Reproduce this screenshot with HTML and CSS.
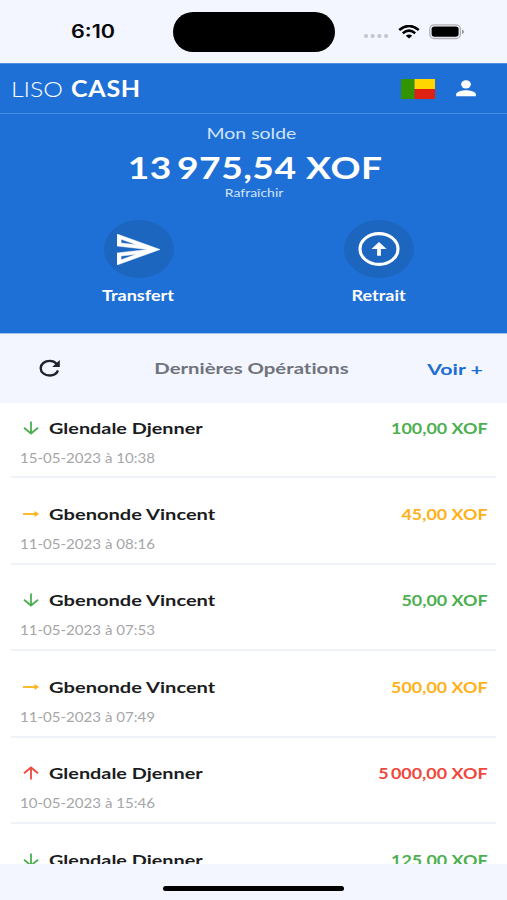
FILE: index.html
```html
<!DOCTYPE html>
<html lang="fr">
<head>
<meta charset="utf-8">
<title>Liso Cash</title>
<link rel="stylesheet" href="styles.css">
</head>
<body>
<div class="phone">
  <div class="status">
    <div class="clock"><span class="wide">6:10</span></div>
    <div class="island"></div>
    <div class="indicators">
      <svg class="dots" width="26" height="6" viewBox="0 0 26 6"><g fill="#c3c5cf"><circle cx="3" cy="3" r="2.1"/><circle cx="9.7" cy="3" r="2.1"/><circle cx="16.4" cy="3" r="2.1"/><circle cx="23.1" cy="3" r="2.1"/></g></svg>
      <svg class="wifi" width="22" height="14" viewBox="0 0 22 14"><g fill="none" stroke="#000" stroke-width="2.6"><path d="M1.2 5Q11-3 20.8 5"/><path d="M4.8 8.2Q11 3.2 17.2 8.2"/></g><path d="M7.8 10.8Q11 8.3 14.2 10.8L11 13.6Z"/></svg>
      <svg class="battery" width="36" height="16" viewBox="0 0 36 16"><rect x=".8" y=".9" width="30.6" height="13.6" rx="4.3" fill="#f4f6fd" stroke="#b0b1b7" stroke-width="1.3"/><rect x="2.6" y="2.6" width="27" height="10.2" rx="2.8"/><path d="M33 5.4Q35 6 35 7.7T33 10Z" fill="#96979f"/></svg>
    </div>
  </div>

  <header class="topbar">
    <div class="brand"><span class="wide liso">LISO</span><span class="wide cash">CASH</span></div>
    <svg class="flag" width="34" height="20" viewBox="0 0 34 20"><path fill="#319400" d="M0 0h13.500v20H0z"/><path fill="#ffd600" d="M13.500 0H34v10H13.500z"/><path fill="#de2110" d="M13.500 10H34v10H13.500z"/></svg>
    <svg class="user" width="20" height="17" viewBox="0 0 20 17" fill="#fff"><ellipse cx="10" cy="4.3" rx="4.9" ry="4.1"/><path d="M.2 16.3v-2.1C.2 11.400 6.700 10.200 10 10.200s9.800 1.200 9.800 4v2.100z"/></svg>
  </header>

  <section class="hero">
    <div class="label"><span class="wide">Mon solde</span></div>
    <div class="balance"><span class="wide">13&#8201;975,54 XOF</span></div>
    <div class="refresh"><span class="wide">Rafraîchir</span></div>
    <div class="actions">
      <div class="action">
        <div class="disc"><svg width="43" height="31" viewBox="2 3 21 18" preserveAspectRatio="none"><path fill="#fff" stroke="#fff" stroke-width=".25" d="M4.010 6.030l7.510 3.220-7.520-1 .010-2.220m7.500 8.720L4 17.970v-2.220l7.510-1M2.010 3L2 10l15 2-15 2 .010 7L23 12 2.010 3z"/></svg></div>
        <div class="caption"><span class="wide">Transfert</span></div>
      </div>
      <div class="action">
        <div class="disc"><svg width="42" height="36" viewBox="0 0 42 36"><ellipse cx="21" cy="18" rx="19" ry="15.400" fill="none" stroke="#fff" stroke-width="3.100"/><path fill="#fff" d="M21 11 28.600 18H22.900v6.800h-3.800V18h-5.700z"/></svg></div>
        <div class="caption"><span class="wide">Retrait</span></div>
      </div>
    </div>
  </section>

  <div class="opsbar">
    <svg class="reload" width="22" height="19" viewBox="0 0 22 19"><path fill="none" stroke="#202329" stroke-width="2.400" d="M19 11.500C17.500 15 14.500 16.500 10.800 16.500 5.600 16.500 1.700 13.300 1.700 9.200S5.600 1.900 10.800 1.900C14 1.900 16 3 17.800 5"/><path fill="#202329" d="M20.800 1v7h-7.600z"/></svg>
    <div class="title"><span class="wide">Dernières Opérations</span></div>
    <div class="more"><span class="wide">Voir +</span></div>
  </div>

  <main class="list">
    <article class="row in">
      <div class="line"><svg class="arrow" viewBox="0 0 16 14"><path d="M8 .5V12.500M1 6.700 8 12.500 15 6.700"/></svg><div class="name"><span class="wide gd">Glendale Djenner</span></div><div class="amount"><span class="wide">100,00 XOF</span></div></div>
      <div class="date"><span class="wide">15-05-2023 à 10:38</span></div>
    </article>
    <article class="row pending">
      <div class="line"><svg class="arrow" viewBox="0 0 16 14"><path d="M0 7H13"/><path class="tip" d="M11.500 4 16 7 11.500 10Z"/></svg><div class="name"><span class="wide">Gbenonde Vincent</span></div><div class="amount"><span class="wide">45,00 XOF</span></div></div>
      <div class="date"><span class="wide">11-05-2023 à 08:16</span></div>
    </article>
    <article class="row in">
      <div class="line"><svg class="arrow" viewBox="0 0 16 14"><path d="M8 .5V12.500M1 6.700 8 12.500 15 6.700"/></svg><div class="name"><span class="wide">Gbenonde Vincent</span></div><div class="amount"><span class="wide">50,00 XOF</span></div></div>
      <div class="date"><span class="wide">11-05-2023 à 07:53</span></div>
    </article>
    <article class="row pending">
      <div class="line"><svg class="arrow" viewBox="0 0 16 14"><path d="M0 7H13"/><path class="tip" d="M11.500 4 16 7 11.500 10Z"/></svg><div class="name"><span class="wide">Gbenonde Vincent</span></div><div class="amount"><span class="wide">500,00 XOF</span></div></div>
      <div class="date"><span class="wide">11-05-2023 à 07:49</span></div>
    </article>
    <article class="row out">
      <div class="line"><svg class="arrow" viewBox="0 0 16 14"><path d="M8 13.500V1.500M1 7.300 8 1.500 15 7.300"/></svg><div class="name"><span class="wide gd">Glendale Djenner</span></div><div class="amount"><span class="wide">5&#8201;000,00 XOF</span></div></div>
      <div class="date"><span class="wide">10-05-2023 à 15:46</span></div>
    </article>
    <article class="row in">
      <div class="line"><svg class="arrow" viewBox="0 0 16 14"><path d="M8 .5V12.500M1 6.700 8 12.500 15 6.700"/></svg><div class="name"><span class="wide gd">Glendale Djenner</span></div><div class="amount"><span class="wide">125,00 XOF</span></div></div>
    </article>
  </main>

  <footer class="homebar"><div class="handle"></div></footer>
</div>
</body>
</html>
```
FILE: styles.css
```css
* { box-sizing: border-box; }
body { margin: 0; font-family: Lato, "Liberation Sans", sans-serif; font-variant-ligatures: none; background: #f3f6ff; }
svg { display: block; flex: none; }
.phone { width: 507px; height: 900px; display: flex; flex-direction: column; overflow: hidden; }

/* the interface uses an extended letter shape */
.wide { display: inline-block; white-space: nowrap; transform: scaleX(var(--stretch, 1)); transform-origin: var(--from, center); }

.status { height: 63px; flex: none; display: grid; grid-template-columns: 173px 162px 1fr; background: #f4f6ff; }
.clock { padding: 21px 0 0 71px; font: 600 18px/22px Inter, sans-serif; color: #080809; --stretch: 1.2; --from: left; }
.island { margin-top: 12px; height: 40px; border-radius: 20px; background: #000; }
.indicators { display: flex; align-items: flex-start; padding-left: 28px; }
.dots { margin-top: 33px; }
.wifi { margin: 25px 0 0 9px; }
.battery { margin: 24px 0 0 9px; }

.topbar { height: 51px; flex: none; display: flex; align-items: center; background: #1e70d6; border-bottom: 1px solid #4b8de0; border-top: 1px solid #4f8fdf; padding: 0 31px 0 11px; }
.brand { flex: 1; display: flex; font-size: 22px; line-height: 26px; color: #fff; --from: left; }
.liso { width: 60px; font-weight: 300; --stretch: 1.13; }
.cash { font-weight: 700; letter-spacing: .6px; --stretch: 1.14; }
.user { margin-left: 21px; }

.hero { height: 219px; flex: none; background: #1e70d6; color: #fff; text-align: center; padding-top: 10px; }
.label { font-size: 14.5px; line-height: 20px; color: #d3e4fa; padding-right: 5px; --stretch: 1.34; }
.balance { font-size: 31px; line-height: 38px; font-weight: 700; margin-top: 4px; padding-left: 3px; letter-spacing: .4px; --stretch: 1.2; }
.refresh { font-size: 11px; line-height: 14px; color: #d3e4fa; padding-left: 1px; --stretch: 1.27; }
.actions { display: flex; justify-content: space-between; padding: 20px 93.5px 0 103.5px; }
.action { width: 70px; display: flex; flex-direction: column; align-items: center; }
.disc { width: 70px; height: 58px; border-radius: 50%; background: #1d66c0; display: flex; align-items: center; justify-content: center; }
.caption { font-size: 15px; line-height: 20px; font-weight: 700; margin-top: 7px; --stretch: 1.2; }

.opsbar { height: 70px; flex: none; background: #f3f6ff; display: grid; grid-template-columns: 114px 1fr 114px; align-items: center; border-top: 1px solid #9fc1ee; }
.reload { margin-left: 39px; }
.title { text-align: center; font-size: 16px; font-weight: 700; color: #70737b; --stretch: 1.27; padding: 0 5px 2px 0; }
.more { font-size: 16px; font-weight: 700; color: #1e6ed2; text-align: right; padding: 0 24px 1px 0; --stretch: 1.33; --from: right; }

.list { flex: 1; min-height: 0; overflow: hidden; background: #fff; padding: 0 11px; }
.row { height: 86.4px; padding: 24.6px 8px 0; border-bottom: 2px solid #eff2f9; font-weight: 700; }
.row:first-child { height: 75.400px; padding-top: 14px; }
.line { display: flex; align-items: center; height: 22px; }
.arrow { width: 16px; height: 14px; margin-left: 3.5px; fill: none; stroke: currentColor; stroke-width: 1.8; }
.arrow .tip { fill: currentColor; stroke: none; }
.name { flex: 1; margin-left: 10.5px; font-size: 15.5px; color: #1b1c1e; --stretch: 1.295; --from: left; }
.name .gd { --stretch: 1.28; }
.amount { font-size: 15.5px; --stretch: 1.155; --from: right; }
.date { font-size: 13.5px; line-height: 20px; margin: 9px 0 0 1px; font-weight: 400; color: #a5a6a8; --stretch: 1.115; --from: left; }
.in { color: #4caf50; }
.pending { color: #ffb118; }
.out { color: #f0483c; }

.homebar { height: 36px; flex: none; background: #f3f6ff; display: flex; justify-content: center; padding-top: 22px; }
.handle { width: 181px; height: 5px; border-radius: 3px; background: #000; }
```
